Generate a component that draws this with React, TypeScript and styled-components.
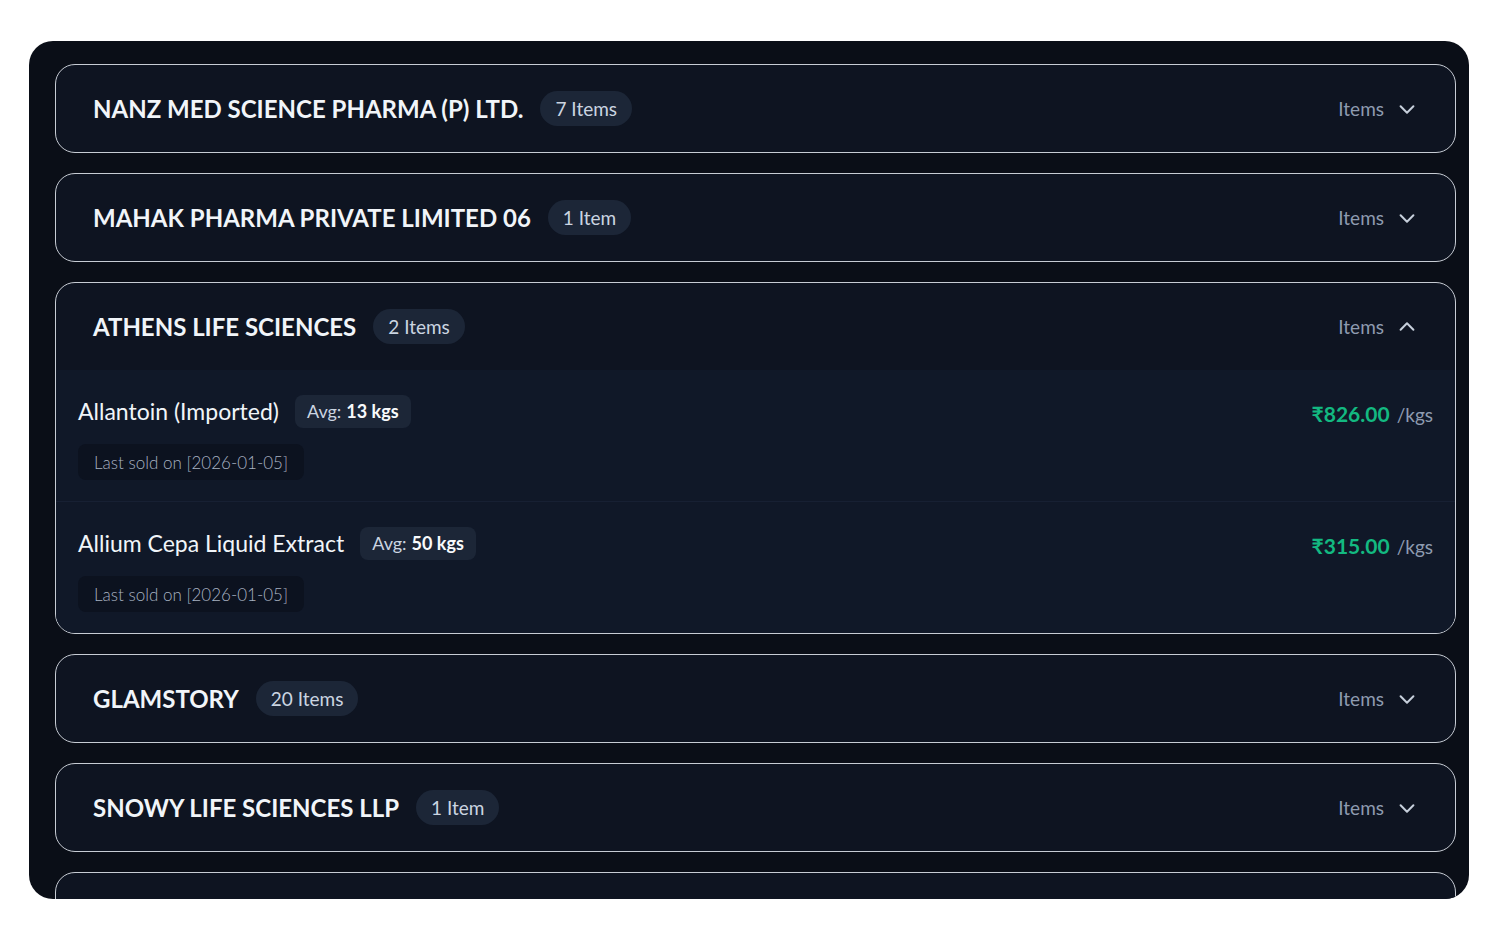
import React, { useState } from 'react'
import styled, { createGlobalStyle } from 'styled-components'

const GlobalStyle = createGlobalStyle`
  body {
    margin: 0;
    background: #ffffff;
    font-family: Lato, "Noto Sans", sans-serif;
  }
`

const Page = styled.div`
  padding: 41px 31px 27px 29px;
`

const Panel = styled.div`
  width: 1440px;
  height: 858px;
  background: #0a0e17;
  border-radius: 24px;
  overflow: hidden;
  padding: 23px 13px 0 26px;
  box-sizing: border-box;
  display: flex;
  flex-direction: column;
  gap: 20px;
`

const Card = styled.div`
  flex-shrink: 0;
  border: 1.5px solid #c7ccd4;
  border-radius: 20px;
  background: #0e1421;
  overflow: hidden;
`

const Header = styled.div`
  height: 87px;
  display: flex;
  align-items: center;
  padding: 0 37px 0 37px;
  cursor: pointer;
`

const Company = styled.h2`
  margin: 0;
  font-size: 24px;
  font-weight: 700;
  color: #f1f5f9;
`

const CountBadge = styled.span`
  margin-left: 17px;
  height: 35px;
  padding: 0 15px;
  display: inline-flex;
  align-items: center;
  border-radius: 18px;
  background: #1c2637;
  color: #cbd5e1;
  font-size: 19px;
`

const Toggle = styled.div`
  margin-left: auto;
  display: flex;
  align-items: center;
  gap: 12px;
  color: #8e9bb0;
  font-size: 19px;
`

const ItemList = styled.div`
  background: #101828;
`

const ItemRow = styled.div`
  display: flex;
  justify-content: space-between;
  padding: 24px 22px 21px 22px;
  & + & {
    border-top: 1px solid #172033;
  }
`

const ItemMain = styled.div`
  display: flex;
  flex-direction: column;
  gap: 16px;
  align-items: flex-start;
`

const NameLine = styled.div`
  display: flex;
  align-items: center;
  gap: 16px;
  height: 34px;
`

const ItemName = styled.span`
  font-size: 23px;
  color: #f1f5f9;
`

const AvgBadge = styled.span`
  height: 33px;
  padding: 0 12px;
  display: inline-flex;
  align-items: center;
  gap: 5px;
  border-radius: 8px;
  background: #1c2637;
  color: #cbd5e1;
  font-size: 18px;
  b {
    color: #f8fafc;
    font-weight: 700;
  }
`

const SoldBadge = styled.span`
  height: 36px;
  padding: 0 16px;
  display: inline-flex;
  align-items: center;
  border-radius: 8px;
  background: #0c121f;
  color: #a7b1c1;
  font-size: 17px;
  font-weight: 300;
`

const PriceBox = styled.div`
  display: flex;
  align-items: baseline;
  gap: 7px;
  height: 40px;
  line-height: 40px;
`

const Price = styled.span`
  color: #13b981;
  font-size: 21px;
  font-weight: 700;
`

const Unit = styled.span`
  color: #8e9bb0;
  font-size: 19px;
`

type Item = { name: string; avg: string; sold: string; price: string; unit: string }
type Supplier = { name: string; count: string; items: Item[] }

const suppliers: Supplier[] = [
  { name: 'NANZ MED SCIENCE PHARMA (P) LTD.', count: '7 Items', items: [] },
  { name: 'MAHAK PHARMA PRIVATE LIMITED 06', count: '1 Item', items: [] },
  {
    name: 'ATHENS LIFE SCIENCES',
    count: '2 Items',
    items: [
      { name: 'Allantoin (Imported)', avg: '13 kgs', sold: '2026-01-05', price: '₹826.00', unit: '/kgs' },
      { name: 'Allium Cepa Liquid Extract', avg: '50 kgs', sold: '2026-01-05', price: '₹315.00', unit: '/kgs' },
    ],
  },
  { name: 'GLAMSTORY', count: '20 Items', items: [] },
  { name: 'SNOWY LIFE SCIENCES LLP', count: '1 Item', items: [] },
  { name: 'ZENLABS ETHICA LTD.', count: '3 Items', items: [] },
]

const Chevron: React.FC<{ up?: boolean }> = ({ up }) => (
  <svg width="22" height="22" viewBox="0 0 24 24" fill="none" stroke="#c5ceda" strokeWidth="2.2" strokeLinecap="round" strokeLinejoin="round">
    {up ? <path d="M5 15l7-7 7 7" /> : <path d="M5 9l7 7 7-7" />}
  </svg>
)

const App: React.FC = () => {
  const [open, setOpen] = useState<string>('ATHENS LIFE SCIENCES')

  return (
    <Page>
      <GlobalStyle />
      <Panel>
        {suppliers.map((s) => {
          const isOpen = open === s.name
          return (
            <Card key={s.name}>
              <Header onClick={() => setOpen(isOpen ? '' : s.name)}>
                <Company>{s.name}</Company>
                <CountBadge>{s.count}</CountBadge>
                <Toggle>
                  Items
                  <Chevron up={isOpen} />
                </Toggle>
              </Header>
              {isOpen && (
                <ItemList>
                  {s.items.map((it) => (
                    <ItemRow key={it.name}>
                      <ItemMain>
                        <NameLine>
                          <ItemName>{it.name}</ItemName>
                          <AvgBadge>
                            Avg: <b>{it.avg}</b>
                          </AvgBadge>
                        </NameLine>
                        <SoldBadge>Last sold on [{it.sold}]</SoldBadge>
                      </ItemMain>
                      <PriceBox>
                        <Price>{it.price}</Price>
                        <Unit>{it.unit}</Unit>
                      </PriceBox>
                    </ItemRow>
                  ))}
                </ItemList>
              )}
            </Card>
          )
        })}
      </Panel>
    </Page>
  )
}

export default App
